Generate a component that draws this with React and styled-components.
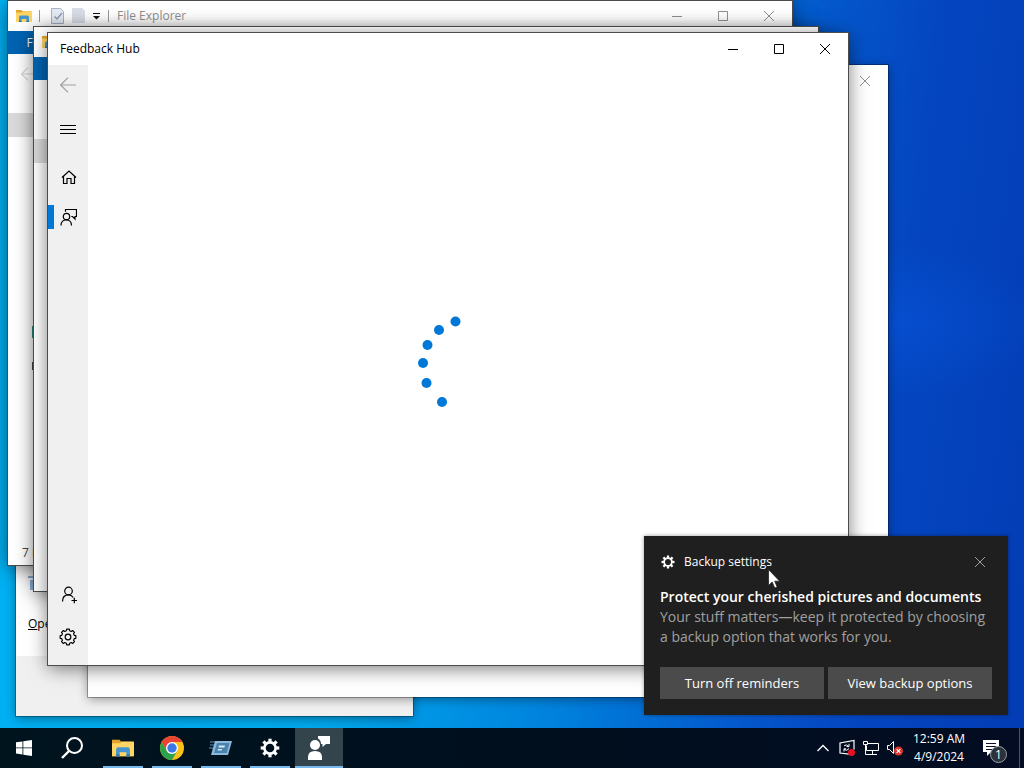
import React from "react";
import styled, { createGlobalStyle, css } from "styled-components";

const GlobalStyle = createGlobalStyle`
  * { box-sizing: border-box; }
  body {
    margin: 0;
    font-family: "Open Sans", "Noto Sans", sans-serif;
    font-size: 12px;
    line-height: 16px;
    color: #000;
  }
  button { font: inherit; color: inherit; border: 0; padding: 0; background: none; }
  svg { display: block; flex: none; }
  h1, h2, p { margin: 0; font: inherit; }
`;

const Desktop = styled.div`
  display: flex;
  flex-direction: column;
  height: 100vh;
  overflow: hidden;
  background:
    radial-gradient(ellipse at 87% 42%, rgba(8, 88, 226, 0.45), transparent 12%),
    linear-gradient(97deg, #00b2f4 0%, #00a8ec 36%, #0080dc 58%, #0458cc 74%, #0446c0 84%, #033cb4 100%);
`;

const Workspace = styled.main`
  position: relative;
  flex: 1;
  min-height: 0;
`;

/* Windows sit freely on the desktop canvas */
const Window = styled.section`
  position: absolute;
  left: ${(p) => p.$x}px;
  top: ${(p) => p.$y}px;
  width: ${(p) => p.$w}px;
  height: ${(p) => p.$h}px;
  display: flex;
  flex-direction: column;
  overflow: hidden;
  background: #fff;
  outline: 1px solid ${(p) => (p.$soft ? "rgba(0,0,0,.3)" : "#4c4c4c")};
  box-shadow: ${(p) => (p.$soft ? "0 2px 10px rgba(0,0,0,.4)" : "0 3px 18px rgba(0,0,0,.55)")};
`;

const TitleBar = styled.header`
  display: flex;
  align-items: center;
  flex: none;
  height: ${(p) => p.$h || 32}px;
  padding-left: ${(p) => p.$pad || 12}px;
  color: ${(p) => (p.$inactive ? "#8f8f8f" : "#000")};
`;

const Title = styled.h1`
  flex: 1;
  white-space: nowrap;
`;

const CaptionButton = styled.button`
  display: grid;
  place-items: center;
  width: 46px;
  height: 100%;
`;

const QuickBar = styled.div`
  display: flex;
  align-items: center;
  gap: 7px;
  margin-right: 8px;
`;

const Divider = styled.span`
  width: 1px;
  height: 12px;
  margin-right: ${(p) => p.$after || 0}px;
  background: #9a9a9a;
`;

const FileTab = styled.button`
  width: 56px;
  height: 23px;
  background: #0063b1;
  color: #fff;
`;

const ExplorerBody = styled.div`
  display: flex;
  flex-direction: column;
  flex: 1;
`;

const NavRow = styled.div`
  display: flex;
  align-items: center;
  height: 40px;
  padding-left: 13px;
  color: #d4d4d4;
`;

const TreeRow = styled.div`
  height: 24px;
  margin-top: 19px;
  background: #d9d9d9;
`;

const TreeIcons = styled.div`
  display: flex;
  flex-direction: column;
  padding: 149px 0 0 23px;
`;

const StatusBar = styled.footer`
  height: 24px;
  padding: 4px 14px;
  color: #444;
`;

const RunBody = styled.div`
  display: flex;
  flex-direction: column;
  flex: 1;
  gap: 24px;
  padding: 10px 12px 24px;
`;

const RunFooter = styled.div`
  height: 61px;
  background: #f0f0f0;
`;

const OpenLabel = styled.label`
  margin-top: auto;
  display: flex;
  gap: 12px;
`;

const OpenText = styled.span`
  display: inline-block;
  &::first-letter { text-decoration: underline; }
`;

const OpenField = styled.input`
  width: 280px;
  height: 16px;
  border: 1px solid #7a7a7a;
`;

const HubBody = styled.div`
  display: flex;
  flex: 1;
`;

const Sidebar = styled.nav`
  display: flex;
  flex-direction: column;
  width: 40px;
  padding-bottom: 8px;
  background: #f0f0f0;
`;

const SideButton = styled.button`
  display: grid;
  place-items: center;
  width: 40px;
  height: 40px;
  margin-top: ${(p) => p.$gap || 0}px;
  color: ${(p) => (p.$dim ? "#a0a0a0" : "#000")};
  ${(p) =>
    p.$active &&
    css`
      background: linear-gradient(#0078d7, #0078d7) left center / 6px 24px no-repeat;
    `}
`;

const SideSpacer = styled.div`
  flex: 1;
`;

const HubContent = styled.div`
  display: grid;
  place-items: center;
  flex: 1;
`;

const Toast = styled.aside`
  position: absolute;
  right: 16px;
  bottom: 13px;
  width: 364px;
  padding: 16px;
  background: #1f1f1f;
  color: #fff;
  box-shadow: 0 0 4px rgba(0, 0, 0, 0.4);
`;

const ToastHeader = styled.header`
  display: flex;
  align-items: center;
  gap: 8px;
  height: 20px;
  margin-bottom: 15px;
`;

const ToastApp = styled.span`
  flex: 1;
`;

const ToastClose = styled.button`
  display: grid;
  place-items: center;
  width: 24px;
  height: 20px;
  color: #a0a0a0;
`;

const ToastTitle = styled.h2`
  font-size: 14px;
  font-weight: 600;
  line-height: 20px;
  white-space: nowrap;
`;

const ToastText = styled.p`
  font-size: 14px;
  line-height: 20px;
  color: #a0a0a0;
  white-space: nowrap;
`;

const ToastActions = styled.div`
  display: flex;
  gap: 4px;
  margin-top: 20px;
`;

const ToastButton = styled.button`
  flex: 1;
  height: 32px;
  background: #4b4b4b;
  font-size: 13px;
`;

const Pointer = styled.svg`
  position: absolute;
  right: 244px;
  bottom: 139px;
`;

const Taskbar = styled.footer`
  display: flex;
  align-items: stretch;
  height: 40px;
  background: linear-gradient(90deg, #00141e, #000f1e 50%, #030c22);
  color: #fff;
`;

const TaskApps = styled.div`
  display: flex;
  gap: 1px;
  margin-left: 3px;
  flex: 1;
`;

const TaskButton = styled.button`
  display: grid;
  place-items: center;
  width: 48px;
  height: 40px;
  background: ${(p) => (p.$active ? "#33444d" : "none")};
  ${(p) =>
    p.$open &&
    css`
      background-image: linear-gradient(#76b9ed, #76b9ed);
      background-repeat: no-repeat;
      background-position: center bottom;
      background-size: ${p.$active ? 48 : 40}px 2px;
    `}
`;

const Tray = styled.div`
  display: flex;
  align-items: center;
`;

const TrayButton = styled.button`
  display: grid;
  place-items: center;
  width: 24px;
  height: 40px;
`;

const Clock = styled.time`
  display: flex;
  flex-direction: column;
  align-items: center;
  width: 64px;
  line-height: 18px;
`;

const NoticeButton = styled.button`
  position: relative;
  display: grid;
  place-items: start;
  width: 48px;
  height: 40px;
  padding: 12px 0 0 12px;
`;

const Badge = styled.span`
  position: absolute;
  left: 19px;
  top: 18px;
  width: 17px;
  height: 17px;
  border: 1px solid #9aa0a8;
  border-radius: 50%;
  background: #2b323c;
  font-size: 12px;
  line-height: 15px;
  text-align: center;
`;

const PeekButton = styled.button`
  width: 5px;
  height: 40px;
  border-left: 1px solid #4b5468;
`;

const MinIcon = () => (
  <svg width="10" height="10" shapeRendering="crispEdges"><path d="M0 5h10v1H0z" fill="currentColor" /></svg>
);
const MaxIcon = () => (
  <svg width="10" height="10"><path d="M.5.5h9v9h-9z" fill="none" stroke="currentColor" /></svg>
);
const CloseIcon = () => (
  <svg width="10" height="10"><path d="M0 0l10 10M10 0L0 10" stroke="currentColor" /></svg>
);

const FolderIcon = ({ size = 16 }) => (
  <svg width={size} height={size} viewBox="0 0 16 16">
    <path d="M0 2h5.5l1 1.300H15.500V14H0z" fill="#e0a52b" />
    <path d="M0 4.500h6l1-1h9V14H0z" fill="#ffd664" />
    <path d="M3 9q0-1.500 1.500-1.500h7Q13 7.500 13 9v5h-2.500v-3h-5v3H3z" fill="#4795cf" />
    <path d="M3 12.500h2.500V14H3zM10.500 12.500H13V14h-2.500z" fill="#2f7bb8" />
  </svg>
);

const BackIcon = ({ size = 16 }) => (
  <svg width={size} height={size} viewBox="0 0 16 16" fill="none" stroke="currentColor" strokeWidth="1.200"><path d="M.7 8H16M8 .7L.7 8 8 15.300" /></svg>
);

const GearIcon = ({ size }) => (
  <svg width={size} height={size} viewBox="-10 -10 20 20" fill="none" stroke="currentColor">
    <circle r="5.600" strokeWidth="2.600" />
    {[0, 45, 90, 135, 180, 225, 270, 315].map((a) => (
      <path key={a} d="M0-6V-9.300" strokeWidth="3.200" transform={`rotate(${a})`} />
    ))}
  </svg>
);

const GearOutline = () => {
  const pts = [];
  for (let i = 0; i < 8; i++) {
    [[-13, 7.5], [-8, 6.1], [8, 6.1], [13, 7.5]].forEach(([d, r]) => {
      const t = ((i * 45 + 22.5 + d) * Math.PI) / 180;
      pts.push(`${(r * Math.sin(t)).toFixed(2)},${(-r * Math.cos(t)).toFixed(2)}`);
    });
  }
  return (
    <svg width="18" height="18" viewBox="-8.500 -8.500 17 17" fill="none" stroke="currentColor" strokeWidth="1.100">
      <polygon points={pts.join(" ")} strokeLinejoin="round" />
      <circle r="2.700" />
    </svg>
  );
};

function Captions({ only }) {
  return (
    <>
      {!only && <CaptionButton type="button" aria-label="Minimize"><MinIcon /></CaptionButton>}
      {!only && <CaptionButton type="button" aria-label="Maximize"><MaxIcon /></CaptionButton>}
      <CaptionButton type="button" aria-label="Close"><CloseIcon /></CaptionButton>
    </>
  );
}

function ExplorerWindow({ x, y, status }) {
  return (
    <Window $x={x} $y={y} $w={784} $h={564}>
      <TitleBar $inactive $h={30} $pad={8}>
        <QuickBar>
          <FolderIcon />
          <Divider $after={3} />
          <svg width="15" height="16">
            <path d="M1.500.5h9l3 3v12h-12z" fill="#e6ecf5" stroke="#a9b3c4" />
            <path d="M4.500 8.500l2.500 2.500 5-6" fill="none" stroke="#8e9db8" strokeWidth="1.500" />
          </svg>
          <svg width="14" height="16"><path d="M0 0h10l3 3v12H0z" fill="#d8dde6" /></svg>
          <svg width="8" height="8"><path d="M0 1h7v1H0zM0 4h7L3.500 7.500z" fill="#111" /></svg>
          <Divider />
        </QuickBar>
        <Title>File Explorer</Title>
        <Captions />
      </TitleBar>
      <FileTab>File</FileTab>
      <ExplorerBody>
        <NavRow><BackIcon size={14} /></NavRow>
        <TreeRow />
        <TreeIcons>
          <svg width="16" height="32"><circle cx="9" cy="16" r="7" fill="#444" /></svg>
          <svg width="16" height="32"><path d="M1 8h15v12H1z" fill="#2c8a80" /></svg>
          <svg width="16" height="32"><path d="M1 12h15v8H1z" fill="#4a4a4a" /></svg>
        </TreeIcons>
      </ExplorerBody>
      <StatusBar>{status}</StatusBar>
    </Window>
  );
}

const DOTS = [[37.5, 6.5], [21, 15], [9.5, 30], [5, 48], [8.5, 68], [24, 87]];

export default function App() {
  return (
    <Desktop>
      <GlobalStyle />
      <Workspace>
        <Window as="form" $x={16} $y={534} $w={397} $h={182} $soft>
          <TitleBar $inactive><Title>Run</Title><Captions only /></TitleBar>
          <RunBody>
            <svg width="24" height="16"><path d="M0 0h22v2H0zM2 4h20v10H2z" fill="#8fb4dc" /></svg>
            <OpenLabel><OpenText>Open:</OpenText><OpenField /></OpenLabel>
          </RunBody>
          <RunFooter />
        </Window>
        <ExplorerWindow x={8} y={1} status="7 items" />
        <ExplorerWindow x={34} y={27} />
        <Window $x={88} $y={65} $w={800} $h={632} $soft>
          <TitleBar $inactive><Title>Settings</Title><Captions only /></TitleBar>
        </Window>
        <Window $x={48} $y={33} $w={800} $h={632}>
          <TitleBar>
            <Title>Feedback Hub</Title>
            <Captions />
          </TitleBar>
          <HubBody>
            <Sidebar>
              <SideButton $dim aria-label="Back"><BackIcon /></SideButton>
              <SideButton $gap={5} aria-label="Menu">
                <svg width="16" height="16" shapeRendering="crispEdges"><path d="M0 3h16v1H0zM0 7h16v1H0zM0 11h16v1H0z" fill="currentColor" /></svg>
              </SideButton>
              <SideButton $gap={7} aria-label="Home">
                <svg width="18" height="16" fill="none" stroke="currentColor" strokeWidth="1.200">
                  <path d="M3 8.500L10 2l7 6.500M4.500 7.500v7H8V9.500h4v5h3.500v-7" />
                </svg>
              </SideButton>
              <SideButton $active aria-label="Feedback">
                <svg width="18" height="18" fill="none" stroke="currentColor" strokeWidth="1.200">
                  <path d="M6.500 3.800V1.500h11v7h-1.500v2.500l-2.500-2.500h-1.200" />
                  <circle cx="7.500" cy="8.500" r="3.200" />
                  <path d="M2 17.500c0-7.500 10.500-7.500 10.500 0" />
                </svg>
              </SideButton>
              <SideSpacer />
              <SideButton aria-label="Account">
                <svg width="18" height="18" fill="none" stroke="currentColor" strokeWidth="1.200">
                  <circle cx="9.500" cy="5" r="3.800" />
                  <path d="M3.500 15.500c0-5 3-6.700 6-6.700 2 0 3.500.8 4.700 2.700M12.500 14.500h5.500M15.300 11.800v5.500" />
                </svg>
              </SideButton>
              <SideButton $gap={2} aria-label="Settings"><GearOutline /></SideButton>
            </Sidebar>
            <HubContent>
              <svg width="100" height="100" fill="#0078d7">
                {DOTS.map(([cx, cy]) => <circle key={cy} cx={cx} cy={cy} r="5" />)}
              </svg>
            </HubContent>
          </HubBody>
        </Window>

        <Toast>
          <ToastHeader>
            <svg width="16" height="16" viewBox="-8 -8 16 16"><g transform="translate(-7 -7)"><GearIcon size={14} /></g></svg>
            <ToastApp>Backup settings</ToastApp>
            <ToastClose aria-label="Dismiss"><CloseIcon /></ToastClose>
          </ToastHeader>
          <ToastTitle>Protect your cherished pictures and documents</ToastTitle>
          <ToastText>Your stuff matters—keep it protected by choosing<br />a backup option that works for you.</ToastText>
          <ToastActions>
            <ToastButton>Turn off reminders</ToastButton>
            <ToastButton>View backup options</ToastButton>
          </ToastActions>
        </Toast>
        <Pointer width="12" height="20">
          <path d="M.5.5v16l3.700-3.500 2.500 6 2.500-1-2.500-5.800h5z" fill="#fff" stroke="#222" strokeWidth=".8" />
        </Pointer>
      </Workspace>

      <Taskbar>
        <TaskButton aria-label="Start">
          <svg width="16" height="16" fill="#fff"><path d="M0 2.300l6.500-.9v6.100H0zM7.300 1.300L16 0v7.500H7.300zM0 8.300h6.500v6.200L0 13.600zM7.300 8.300H16V16l-8.700-1.300z" /></svg>
        </TaskButton>
        <TaskButton aria-label="Search">
          <svg width="22" height="22" fill="none" stroke="#fff" strokeWidth="2"><circle cx="13.500" cy="8.500" r="7.500" /><path d="M8 14l-7 7" strokeWidth="2.400" /></svg>
        </TaskButton>
        <TaskApps>
          <TaskButton $open aria-label="File Explorer"><FolderIcon size={22} /></TaskButton>
          <TaskButton $open aria-label="Chrome">
            <svg width="24" height="24" viewBox="-12 -12 24 24">
              <circle r="12" fill="#fbc116" />
              <path d="M-10.390-6A12 12 0 0 1 10.390-6H0L-5.200 3z" fill="#ea4335" />
              <path d="M-10.390-6A12 12 0 0 0 0 12L5.200 3 0 6-5.200 3z" fill="#2ba24c" />
              <circle r="6" fill="#fff" />
              <circle r="4.700" fill="#3b78e7" />
            </svg>
          </TaskButton>
          <TaskButton $open aria-label="Run">
            <svg width="24" height="20">
              <path d="M6 3h17l-4 14H2z" fill="#8db9da" />
              <path d="M8 5h12.500l-2.800 10H5z" fill="#4a82ae" />
              <path d="M10 7.500h6l-.6 2h-6zM9 11h4l-.5 1.500h-4z" fill="#d6e9f6" />
              <path d="M1 4h5M1 7h4M0 10h4" stroke="#5f95bb" />
            </svg>
          </TaskButton>
          <TaskButton $open aria-label="Settings"><GearIcon size={20} /></TaskButton>
          <TaskButton $open $active aria-label="Feedback Hub">
            <svg width="22" height="24" fill="#fff">
              <circle cx="7" cy="9" r="5" />
              <path d="M0 24v-3q0-6 7-6t7 6v3z" />
              <path d="M10 0h12v8h-4l-3.500 3V8H13q0-4-3-5.500z" />
            </svg>
          </TaskButton>
        </TaskApps>
        <Tray>
          <TrayButton aria-label="Show hidden icons">
            <svg width="12" height="8" fill="none" stroke="#fff" strokeWidth="1.300"><path d="M.5 7L6 1.500 11.500 7" /></svg>
          </TrayButton>
          <TrayButton aria-label="Update status">
            <svg width="17" height="18" fill="none" stroke="#fff" strokeWidth="1.200">
              <path d="M10 15.200L1 14V4l14-2.500v9" />
              <path d="M5 6.800q2.500-2 4.500.5M10 4.800V7.600H7.500M10 9.500q-2 3-4.800 1M5 12.500V9.800H7" strokeWidth="1" />
              <circle cx="12.500" cy="13.500" r="3.500" fill="#e81123" stroke="none" />
            </svg>
          </TrayButton>
          <TrayButton aria-label="Network">
            <svg width="18" height="16" fill="none" stroke="#fff">
              <path d="M5.500 3.500h11v7h-12v-5M10.500 10.500v4M6 14.500h9M1.500 1.500h4v3h-4zM3.500 4.500v10h3" />
            </svg>
          </TrayButton>
          <TrayButton aria-label="Volume muted">
            <svg width="18" height="16" fill="none" stroke="#fff">
              <path d="M1.500 5.500h2l4-4v12l-4-4h-2z" />
              <circle cx="12.500" cy="11" r="4.500" fill="#d9362b" stroke="none" />
              <path d="M10.700 9.200l3.600 3.600M14.300 9.200l-3.600 3.600" strokeWidth="1.200" />
            </svg>
          </TrayButton>
          <Clock><span>12:59 AM</span><span>4/9/2024</span></Clock>
          <NoticeButton aria-label="Notifications">
            <svg width="16" height="16"><path d="M0 0h16v12H8l-4 4v-4H0z" fill="#fff" /><path d="M3 3.500h10M3 6.500h10M3 9.500h7" stroke="#06102a" /></svg>
            <Badge>1</Badge>
          </NoticeButton>
          <PeekButton aria-label="Show desktop" />
        </Tray>
      </Taskbar>
    </Desktop>
  );
}
